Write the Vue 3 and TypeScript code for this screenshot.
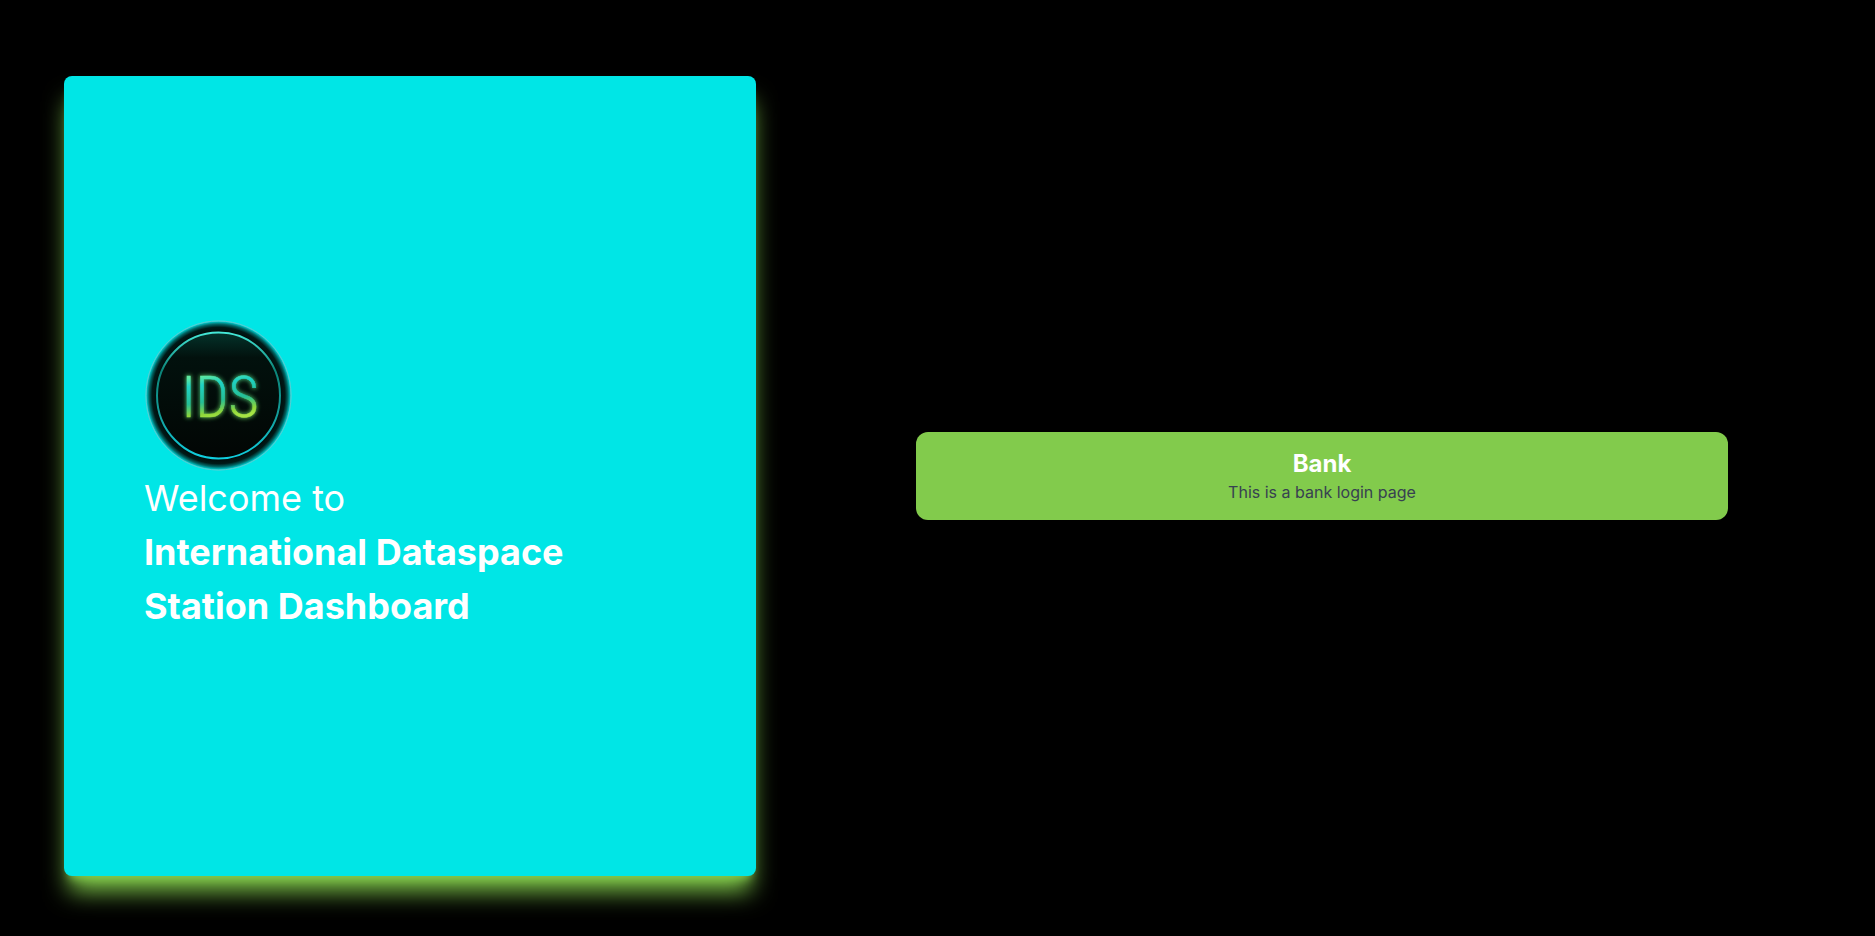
<script setup lang="ts">
interface LoginOption {
  title: string
  description: string
}

const headingLines: string[] = ['International Dataspace', 'Station Dashboard']
const options: LoginOption[] = [
  { title: 'Bank', description: 'This is a bank login page' },
]
</script>

<template>
  <main class="page">
    <section class="welcome">
      <svg class="logo" viewBox="0 0 148 152" role="img" aria-label="IDS logo">
        <defs>
          <radialGradient id="disc">
            <stop offset="0" stop-color="#020805" />
            <stop offset="0.85" stop-color="#010d0b" />
            <stop offset="0.91" stop-color="#001a18" />
            <stop offset="0.95" stop-color="#006563" />
            <stop offset="0.98" stop-color="#00b9bb" />
            <stop offset="1" stop-color="#35dfe3" />
          </radialGradient>
          <linearGradient id="sheen" x1="0" y1="0" x2="0" y2="1">
            <stop offset="0" stop-color="#04332b" />
            <stop offset="0.2" stop-color="#02110d" />
            <stop offset="1" stop-color="#020604" />
          </linearGradient>
          <linearGradient id="ring" x1="0" y1="0" x2="0" y2="1">
            <stop offset="0" stop-color="#45e8d8" />
            <stop offset="0.3" stop-color="#0b8478" />
            <stop offset="0.65" stop-color="#139d9a" />
            <stop offset="1" stop-color="#10cfe0" />
          </linearGradient>
          <linearGradient id="neon" gradientUnits="userSpaceOnUse" x1="66" y1="56" x2="72" y2="99">
            <stop offset="0" stop-color="#5fe8a0" />
            <stop offset="0.2" stop-color="#1fd3c4" />
            <stop offset="0.6" stop-color="#25bf96" />
            <stop offset="0.88" stop-color="#8fd63a" />
            <stop offset="1" stop-color="#a6e444" />
          </linearGradient>
          <filter id="glow" x="-30%" y="-30%" width="160%" height="160%">
            <feGaussianBlur stdDeviation="2" />
          </filter>
        </defs>
        <ellipse cx="74.5" cy="76.5" rx="73" ry="75" fill="url(#disc)" />
        <ellipse cx="74.5" cy="76.5" rx="72.5" ry="74.5" fill="none" stroke="#55cfd3" stroke-width="1" />
        <ellipse cx="74.5" cy="76.5" rx="61.5" ry="63" fill="url(#sheen)" stroke="url(#ring)" stroke-width="2" />
        <text class="mark halo" x="76" y="98" filter="url(#glow)">IDS</text>
        <text class="mark" x="76" y="98">IDS</text>
      </svg>
      <h1 class="heading">
        <span class="lead">Welcome to</span>
        <span v-for="line in headingLines" :key="line">{{ line }}</span>
      </h1>
    </section>

    <nav class="options" aria-label="Login options">
      <button v-for="option in options" :key="option.title" type="button" class="option">
        <span class="option-title">{{ option.title }}</span>
        <span class="option-text">{{ option.description }}</span>
      </button>
    </nav>
  </main>
</template>

<style>
body {
  margin: 0;
  background: #000;
}
</style>

<style scoped>
.page {
  box-sizing: border-box;
  min-height: 100vh;
  padding: 76px 147px 60px 64px;
  display: grid;
  grid-template-columns: 692fr 812fr;
  column-gap: 160px;
  font-family: Inter, "Liberation Sans", sans-serif;
}

.welcome {
  display: flex;
  flex-direction: column;
  justify-content: center;
  padding: 0 80px;
  border-radius: 8px;
  background: #00e6e6;
  box-shadow: 0 20px 25px -5px #82cb4c, 0 8px 10px -6px #82cb4c;
}

.logo {
  display: block;
  width: 148px;
  height: 152px;
}

.mark {
  font-family: "Roboto Condensed", "Liberation Sans Narrow", Roboto, sans-serif;
  font-size: 58px;
  font-weight: 300;
  text-anchor: middle;
  fill: url(#neon);
  stroke: url(#neon);
  stroke-width: 0.5;
}

.halo {
  stroke: #3f9b4c;
  stroke-width: 2;
}

.heading {
  display: flex;
  flex-direction: column;
  margin: 0;
  color: #fff;
  font-size: 36px;
  line-height: 54px;
  font-weight: 700;
}

.lead {
  font-weight: 400;
}

.options {
  display: flex;
  flex-direction: column;
  justify-content: center;
  gap: 16px;
}

.option {
  display: flex;
  flex-direction: column;
  align-items: center;
  padding: 16px;
  border: 0;
  border-radius: 12px;
  background: #82cb4c;
  font-family: inherit;
  cursor: pointer;
}

.option-title {
  color: #fff;
  font-size: 24px;
  line-height: 32px;
  font-weight: 700;
}

.option-text {
  color: #374151;
  font-size: 16px;
  line-height: 24px;
}
</style>
